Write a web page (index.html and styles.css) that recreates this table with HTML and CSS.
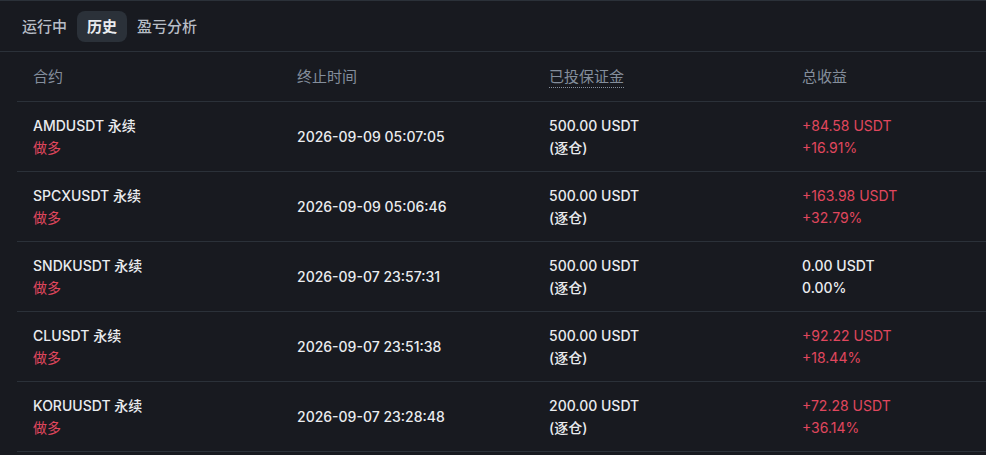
FILE: index.html
```html
<!DOCTYPE html>
<html lang="zh">
<head>
<meta charset="utf-8">
<link rel="stylesheet" href="styles.css">
</head>
<body>
<div class="panel">
  <div class="tabs">
    <div class="tab">运行中</div>
    <div class="tab active">历史</div>
    <div class="tab">盈亏分析</div>
  </div>
  <div class="table">
    <div class="row head">
      <div class="cell">合约</div>
      <div class="cell">终止时间</div>
      <div class="cell"><span class="dotted">已投保证金</span></div>
      <div class="cell">总收益</div>
    </div>
    <div class="row">
      <div class="cell"><div class="sym">AMDUSDT 永续</div><div class="red">做多</div></div>
      <div class="cell">2026-09-09 05:07:05</div>
      <div class="cell"><div>500.00 USDT</div><div>(逐仓)</div></div>
      <div class="cell red"><div>+84.58 USDT</div><div>+16.91%</div></div>
    </div>
    <div class="row">
      <div class="cell"><div class="sym">SPCXUSDT 永续</div><div class="red">做多</div></div>
      <div class="cell">2026-09-09 05:06:46</div>
      <div class="cell"><div>500.00 USDT</div><div>(逐仓)</div></div>
      <div class="cell red"><div>+163.98 USDT</div><div>+32.79%</div></div>
    </div>
    <div class="row">
      <div class="cell"><div class="sym">SNDKUSDT 永续</div><div class="red">做多</div></div>
      <div class="cell">2026-09-07 23:57:31</div>
      <div class="cell"><div>500.00 USDT</div><div>(逐仓)</div></div>
      <div class="cell"><div>0.00 USDT</div><div>0.00%</div></div>
    </div>
    <div class="row">
      <div class="cell"><div class="sym">CLUSDT 永续</div><div class="red">做多</div></div>
      <div class="cell">2026-09-07 23:51:38</div>
      <div class="cell"><div>500.00 USDT</div><div>(逐仓)</div></div>
      <div class="cell red"><div>+92.22 USDT</div><div>+18.44%</div></div>
    </div>
    <div class="row">
      <div class="cell"><div class="sym">KORUUSDT 永续</div><div class="red">做多</div></div>
      <div class="cell">2026-09-07 23:28:48</div>
      <div class="cell"><div>200.00 USDT</div><div>(逐仓)</div></div>
      <div class="cell red"><div>+72.28 USDT</div><div>+36.14%</div></div>
    </div>
  </div>
</div>
</body>
</html>
```
FILE: styles.css
```css
html, body {
  margin: 0;
  padding: 0;
  background: #181a20;
}
body {
  font-family: Inter, "Noto Sans CJK SC", sans-serif;
  font-size: 14px;
  color: #eaecef;
}
.panel {
  border-top: 1px solid #2b3139;
  height: 454px;
  overflow: hidden;
}
.tabs {
  display: flex;
  align-items: center;
  padding: 9px 0 9px 12px;
  border-bottom: 1px solid #2b3139;
  height: 32px;
}
.tab {
  color: #b7bdc6;
  font-size: 15px;
  font-weight: 500;
  padding: 0 10px;
  height: 31px;
  line-height: 31px;
  border-radius: 8px;
}
.tab.active {
  background: #2b3139;
  color: #eaecef;
  font-weight: 600;
}
.table {
  margin-left: 17px;
}
.row {
  display: grid;
  grid-template-columns: 264px 252px 253px 1fr;
  align-items: center;
  height: 69px;
  border-bottom: 1px solid #2b3139;
  font-weight: 500;
}
.row.head {
  height: 49px;
  font-size: 15px;
  font-weight: 400;
  color: #848e9c;
}
.cell {
  padding-left: 16px;
  line-height: 22px;
}
.dotted {
  border-bottom: 1px dotted #848e9c;
  padding-bottom: 1px;
}
.red {
  color: #e0475e;
  font-weight: 400;
}
```
